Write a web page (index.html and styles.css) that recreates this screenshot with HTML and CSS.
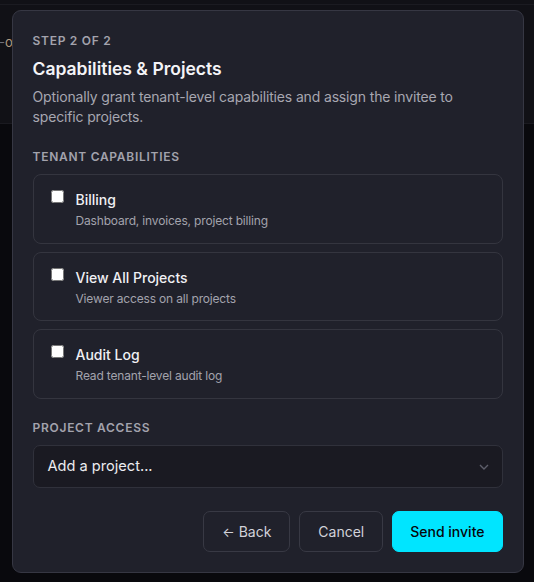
FILE: index.html
```html
<!DOCTYPE html>
<html lang="en">
<head>
<meta charset="UTF-8">
<meta name="viewport" content="width=device-width, initial-scale=1.0"/>
<title>Invite member</title>
<link rel="stylesheet" href="styles.css">
</head>
<body>
<div class="topbar"></div>
<div class="header"><span class="crumb">-<b>o</b></span></div>

<div class="backdrop">
  <div class="modal">
    <div class="step">Step 2 of 2</div>
    <h2 class="title">Capabilities &amp; Projects</h2>
    <p class="desc">Optionally grant tenant-level capabilities and assign the invitee to specific projects.</p>

    <div class="section-label">Tenant capabilities</div>
    <div class="cards">
      <label class="card">
        <input type="checkbox">
        <div class="card-text">
          <div class="card-title">Billing</div>
          <div class="card-sub">Dashboard, invoices, project billing</div>
        </div>
      </label>
      <label class="card">
        <input type="checkbox">
        <div class="card-text">
          <div class="card-title">View All Projects</div>
          <div class="card-sub">Viewer access on all projects</div>
        </div>
      </label>
      <label class="card">
        <input type="checkbox">
        <div class="card-text">
          <div class="card-title">Audit Log</div>
          <div class="card-sub">Read tenant-level audit log</div>
        </div>
      </label>
    </div>

    <div class="section-label second">Project access</div>
    <div class="select">
      <span>Add a project...</span>
      <svg width="10" height="6" viewBox="0 0 10 6"><path d="M1 1l4 4 4-4" fill="none" stroke="#5d5e6a" stroke-width="1.4"/></svg>
    </div>

    <div class="actions">
      <button class="btn"><span class="arrow">&larr;</span> Back</button>
      <button class="btn">Cancel</button>
      <button class="btn primary">Send invite</button>
    </div>
  </div>
</div>
</body>
</html>
```

FILE: styles.css
```css
body { margin: 0; background: #09090d; font-family: Inter, "Noto Sans", sans-serif; color: #e8e8ee; height: 582px; overflow: hidden; }
.topbar { height: 4px; background: #111116; border-bottom: 1px solid #1b1b21; }
.header { height: 118px; background: #111116; border-bottom: 1px solid #1a1a20; display: flex; align-items: center; }
.crumb { font-size: 13px; color: #70707a; margin-left: -1px; margin-top: -45px; }
.crumb b { font-weight: 400; color: #b09a80; }

.backdrop { position: fixed; inset: 0; padding: 10px 0 0 1px; display: flex; align-items: flex-start; justify-content: center; }
.modal { width: 470px; background: #20212b; border: 1px solid #363743; border-radius: 9px; padding: 22px 20px 20px 20px; }

.step { font-size: 12px; line-height: 16px; font-weight: 600; letter-spacing: 0.06em; text-transform: uppercase; color: #a3a3ad; }
.title { margin: 8px 0 0; font-size: 17.5px; line-height: 24px; font-weight: 600; color: #f4f4f7; }
.desc { margin: 6px 0 0; font-size: 14px; line-height: 20px; letter-spacing: -0.15px; color: #a7a7b1; }

.section-label { margin-top: 22px; font-size: 12px; line-height: 16px; font-weight: 600; letter-spacing: 0.06em; text-transform: uppercase; color: #a3a3ad; }
.section-label.second { margin-top: 21px; }

.cards { margin-top: 9px; display: flex; flex-direction: column; gap: 8px; }
.card { display: flex; gap: 12px; align-items: flex-start; border: 1px solid #34353f; border-radius: 8px; padding: 15px 16px 13.5px 16px; }
.card input { margin: 0 0 0 1px; width: 13px; height: 13px; }
.card-title { font-size: 14px; line-height: 20px; font-weight: 500; color: #f0f0f4; }
.card-sub { margin-top: 3px; font-size: 12px; line-height: 16px; letter-spacing: -0.17px; color: #a3a3ad; }

.select { margin-top: 9px; height: 41px; border: 1px solid #30313b; border-radius: 7px; background: #1a1a22; display: flex; align-items: center; justify-content: space-between; padding: 0 14px; font-size: 14.6px; color: #ececf0; }
.select svg { margin-top: 1px; margin-right: -1px; }

.actions { margin-top: 23px; display: flex; justify-content: flex-end; gap: 9px; }
.btn { font-family: inherit; font-size: 14px; height: 41px; padding: 0 18px; border-radius: 7px; border: 1px solid #383944; background: transparent; color: #d2d2da; }
.btn .arrow { font-size: 13px; }
.btn.primary { background: #00e5ff; border-color: #00e5ff; color: #07070b; font-weight: 500; padding: 0 17px; }
```
